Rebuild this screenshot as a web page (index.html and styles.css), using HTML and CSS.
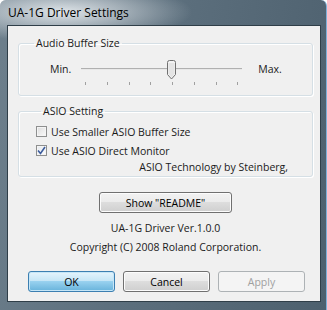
FILE: index.html
```html
<!DOCTYPE html>
<html lang="en">
<head>
    <meta charset="UTF-8">
    <title>UA-1G Driver Settings</title>
    <link rel="stylesheet" href="styles.css">
</head>
<body>
    <div class="window">
        <div class="title-bar">UA-1G Driver Settings</div>
        <div class="client">
            <fieldset class="group buffer-group">
                <legend>Audio Buffer Size</legend>
                <div class="slider-row">
                    <span class="slider-label">Min.</span>
                    <div class="slider">
                        <div class="track"></div>
                        <svg class="thumb" width="11" height="20" viewBox="0 0 11 20">
                            <path d="M1.5 2.5 Q1.5 0.5 3.5 0.5 H7.5 Q9.5 0.5 9.5 2.5 V14.5 L5.5 19 L1.5 14.5 Z" fill="#f2f2f2" stroke="#707070"/>
                            <path d="M2.5 3 H8.5 V14 L5.5 17.5 L2.5 14 Z" fill="#e4e4e4"/>
                        </svg>
                        <div class="ticks">
                            <span></span><span></span><span></span><span></span>
                            <span></span><span></span><span></span><span></span>
                        </div>
                    </div>
                    <span class="slider-label">Max.</span>
                </div>
            </fieldset>

            <fieldset class="group asio-group">
                <legend>ASIO Setting</legend>
                <label class="check">
                    <span class="box"></span>
                    Use Smaller ASIO Buffer Size
                </label>
                <label class="check">
                    <span class="box checked">
                        <svg width="9" height="9" viewBox="0 0 9 9">
                            <path d="M1 4.5 L3.5 7.5 L8 1" fill="none" stroke="#3c5c9c" stroke-width="1.6"/>
                        </svg>
                    </span>
                    Use ASIO Direct Monitor
                </label>
                <div class="credit">ASIO Technology by Steinberg,</div>
            </fieldset>

            <div class="center">
                <button class="btn readme-btn">Show "README"</button>
            </div>
            <div class="info">UA-1G Driver Ver.1.0.0</div>
            <div class="info copyright">Copyright (C) 2008 Roland Corporation.</div>

            <div class="button-row">
                <button class="btn default-btn">OK</button>
                <button class="btn">Cancel</button>
                <button class="btn" disabled>Apply</button>
            </div>
        </div>
    </div>
</body>
</html>
```

FILE: styles.css
```css
* {
    margin: 0;
    padding: 0;
    box-sizing: border-box;
}

body {
    width: 327px;
    height: 310px;
    overflow: hidden;
    font-family: "Open Sans", "DejaVu Sans", sans-serif;
    font-size: 10.5px;
    color: #1a1a1a;
}

.window {
    width: 327px;
    height: 310px;
    padding: 0 5px 8px 7px;
    display: flex;
    flex-direction: column;
    background:
        radial-gradient(ellipse 130px 30px at 62px 12px, rgba(236, 240, 243, 0.9), rgba(236, 240, 243, 0) 100%),
        linear-gradient(100deg, #6d7f8c 0%, #5c6f7d 45%, #4d606e 100%);
    border-right: 1px solid #7fb0d8;
    border-radius: 6px 6px 0 0;
}

.title-bar {
    height: 25px;
    padding: 4px 0 0 1px;
    font-size: 12px;
    color: #000;
    flex-shrink: 0;
}

.client {
    flex: 1;
    background: #f0f0f0;
    border: 1px solid #2f3e48;
    padding: 10px 7px 0 10px;
    display: flex;
    flex-direction: column;
}

.group {
    border: 1px solid #d5dfe5;
    border-radius: 3px;
    box-shadow: inset 1px 1px 0 #fff, 1px 1px 0 #fff;
    padding: 0 10px;
}

.group legend {
    margin-left: 5px;
    padding: 0 2px;
}

.buffer-group {
    height: 60px;
}

.slider-row {
    display: flex;
    align-items: flex-start;
    padding: 12px 0 0 21px;
}

.slider-label {
    line-height: 14px;
}

.slider {
    position: relative;
    width: 161px;
    height: 26px;
    margin: 0 16px 0 10px;
}

.track {
    margin-top: 6px;
    height: 2px;
    border-top: 1px solid #b0b0b0;
    border-bottom: 1px solid #e8e8e8;
}

.thumb {
    position: absolute;
    left: 85px;
    top: -2px;
}

.ticks {
    display: flex;
    justify-content: space-between;
    margin-top: 12px;
    padding: 0 4px;
}

.ticks span {
    width: 1px;
    height: 3px;
    background: #a0a0a0;
}

.asio-group {
    margin-top: 8px;
    height: 73px;
    padding: 4px 0 0 17px;
}

.check {
    display: flex;
    align-items: center;
    gap: 4px;
    height: 19px;
}

.box {
    width: 11px;
    height: 11px;
    border: 1px solid #8e8f8f;
    background: linear-gradient(135deg, #dcdcdc, #fafafa);
    box-shadow: inset 0 0 0 1px #f4f4f4;
    display: flex;
    align-items: center;
    justify-content: center;
}

.box.checked {
    background: linear-gradient(135deg, #e4e8ee, #fdfdfd);
}

.credit {
    text-align: right;
    padding-right: 24px;
}

.center {
    display: flex;
    justify-content: center;
    margin-top: 15px;
}

.btn {
    font-family: inherit;
    font-size: 10.5px;
    color: #000;
    height: 21px;
    border: 1px solid #707070;
    border-radius: 3px;
    background: linear-gradient(#f2f2f2 0%, #ebebeb 48%, #dddddd 50%, #cfcfcf 100%);
    box-shadow: inset 0 0 0 1px #fcfcfc;
}

.readme-btn {
    width: 133px;
}

.info {
    text-align: center;
    margin-top: 8px;
}

.copyright {
    margin-top: 5px;
}

.button-row {
    display: flex;
    gap: 8px;
    margin: 17px 0 0 10px;
}

.button-row .btn {
    width: 87px;
}

.default-btn {
    border-color: #3c7fb1;
    background: linear-gradient(#e5f4fc 0%, #c4e5f6 48%, #98d1ef 50%, #68b3db 100%);
    box-shadow: inset 0 0 0 1px #c6e6f7;
}

.btn:disabled {
    color: #a0a0a0;
    border-color: #adb2b5;
    background: #f4f4f4;
    box-shadow: none;
}
```
